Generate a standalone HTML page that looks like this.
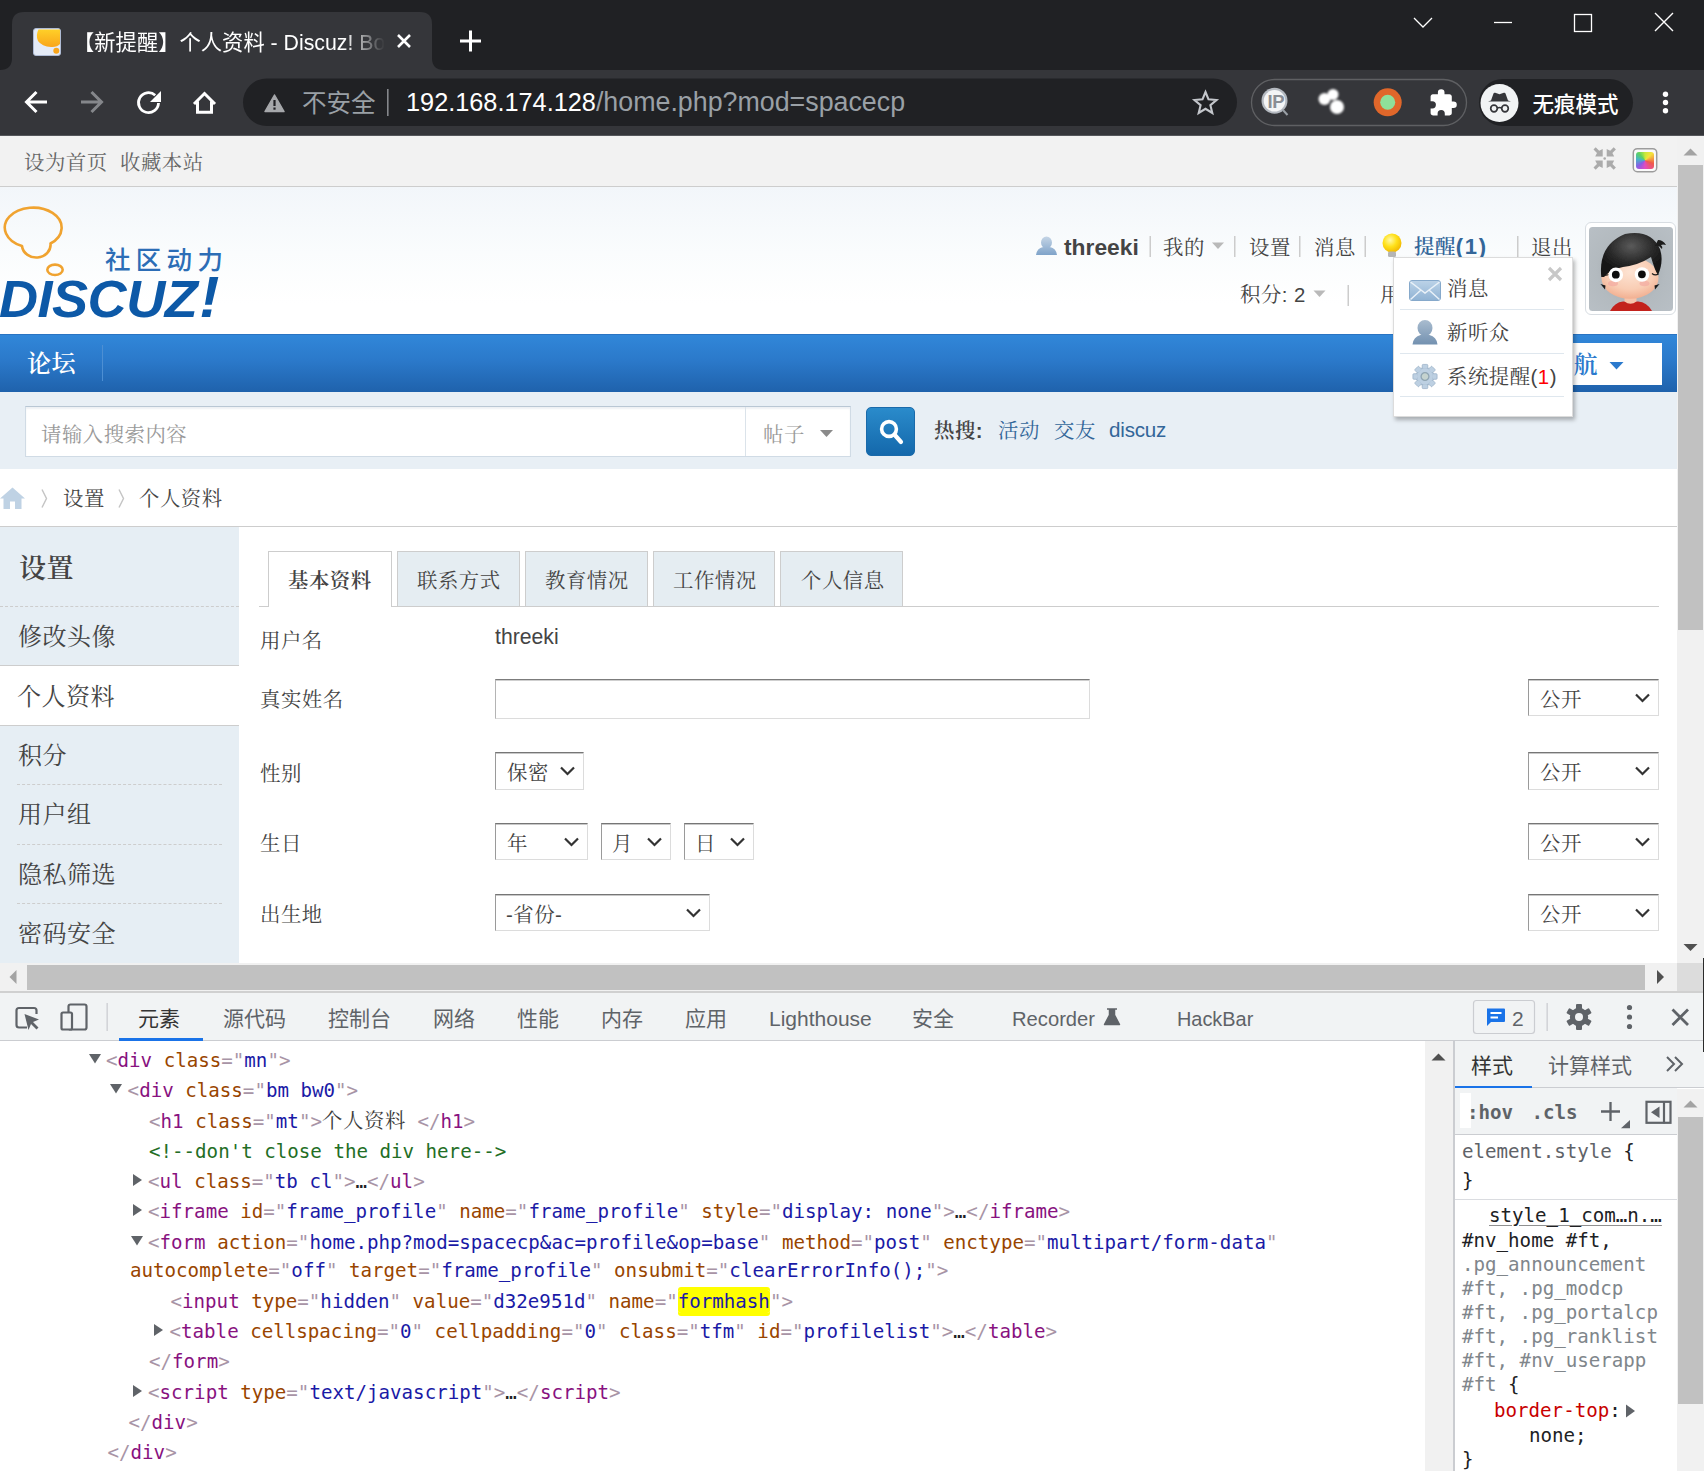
<!DOCTYPE html>
<html lang="zh-CN">
<head>
<meta charset="utf-8">
<title>【新提醒】个人资料 - Discuz! Board</title>
<style>
html,body{margin:0;padding:0;}
body{width:1704px;height:1471px;overflow:hidden;background:#fff;position:relative;font-family:"Liberation Sans","Noto Sans CJK SC",sans-serif;}
#root{position:absolute;left:0;top:0;width:1704px;height:1471px;overflow:hidden;}
.a{position:absolute;}
.t{position:absolute;white-space:nowrap;line-height:30px;height:30px;}
.ui{font-family:"Liberation Sans","Noto Sans CJK SC",sans-serif;}
.sf{font-family:"Liberation Sans","Noto Serif CJK SC",serif;}
.mono{font-family:"DejaVu Sans Mono","Liberation Mono","Noto Serif CJK SC",monospace;}
svg{position:absolute;overflow:visible;}
/* page text */
.pg{font-size:20.4px;letter-spacing:0.5px;color:#444;}
.pg .t{margin-top:1.5px;}
/* devtools dom */
.dom{font-size:19.15px;color:#202124;}
.tg{color:#881280;}
.an{color:#994500;}
.av{color:#1a1aa6;}
.pc{color:#a894a6;}
.cm{color:#236e25;}
.gy{color:#5f6368;}
.gy2{color:#80868b;}
.sel{background:#fff;border:1px solid #dcdcdc;border-top:1px solid #767676;border-left:1px solid #9a9a9a;box-shadow:inset 0 1px 0 #c8c8c8;padding-top:1px;}
</style>
</head>
<body>
<div id="root">
<!--CHROME-->
<div class="a" style="left:0;top:0;width:1704px;height:70px;background:#202124"></div>
<div class="a" style="left:0;top:70px;width:1704px;height:65px;background:#35363a"></div>
<div class="a" style="left:0;top:135px;width:1704px;height:1px;background:#55575b;z-index:6"></div>
<svg style="left:0;top:0" width="1704" height="135" viewBox="0 0 1704 135">
<path d="M0,70 Q12,70 12,58 L12,24 Q12,12 24,12 L420,12 Q432,12 432,24 L432,58 Q432,70 444,70 Z" fill="#35363a"/>
<!-- favicon -->
<rect x="33.5" y="28.5" width="27" height="27" rx="2.5" fill="#e4ebf6" stroke="#aebbd4" stroke-width="1"/>
<defs><linearGradient id="fvg" x1="0" y1="0" x2="0" y2="1"><stop offset="0" stop-color="#ffd028"/><stop offset="1" stop-color="#f9a51a"/></linearGradient></defs><path d="M38.500,29.500 H60 V44 Q57,47.500 51,47 Q42,46.500 38,41 Q35.500,35 38.500,29.500 Z" fill="url(#fvg)"/>
<circle cx="56.300" cy="50.700" r="3" fill="#f9a51a"/>
<!-- tab close -->
<path d="M398,35 L410,47 M410,35 L398,47" stroke="#fff" stroke-width="2.6" fill="none"/>
<!-- new tab plus -->
<path d="M460,41 H481 M470.5,30.5 V51.500" stroke="#fff" stroke-width="3" fill="none"/>
<!-- window controls -->
<path d="M1414,18 L1423,27 L1432,18" stroke="#fff" stroke-width="1.3" fill="none"/>
<path d="M1494,22.500 H1512" stroke="#fff" stroke-width="1.3" fill="none"/>
<rect x="1574.500" y="14.500" width="17" height="17" stroke="#fff" stroke-width="1.3" fill="none"/>
<path d="M1655,13 L1673,31 M1673,13 L1655,31" stroke="#fff" stroke-width="1.4" fill="none"/>
<!-- nav buttons -->
<path d="M47,102 H27 M36.500,92 L26.500,102 L36.500,112" stroke="#fff" stroke-width="3" fill="none"/>
<path d="M81,102 H101 M91.500,92 L101.500,102 L91.500,112" stroke="#85878b" stroke-width="3" fill="none"/>
<path d="M158.500,103 A10,10 0 1 1 155.200,95.200" stroke="#fff" stroke-width="2.800" fill="none"/>
<path d="M161,91 V102 H150 Z" fill="#fff"/>
<path d="M194,104 L204.500,93.500 L215,104 M197.500,101.500 V112.300 H211.500 V101.500" stroke="#fff" stroke-width="3" fill="none" stroke-linejoin="miter"/>
<!-- omnibox -->
<rect x="243" y="78.500" width="994" height="47.500" rx="23.700" fill="#202124"/>
<path d="M274.500,95 L284,111.500 H265 Z" fill="#a6a8ab" stroke="#a6a8ab" stroke-width="1.500" stroke-linejoin="round"/>
<rect x="273.400" y="100" width="2.200" height="6" fill="#202124"/><rect x="273.400" y="107.500" width="2.200" height="2.200" fill="#202124"/>
<rect x="387" y="89" width="1.600" height="27" fill="#85878b"/>
<!-- star -->
<path d="M1205.500,92 L1208.500,99.300 L1216.500,100 L1210.400,105.200 L1212.300,113 L1205.500,108.800 L1198.700,113 L1200.600,105.200 L1194.500,100 L1202.500,99.300 Z" stroke="#c4c7cc" stroke-width="2.1" fill="none" stroke-linejoin="miter"/>
<!-- extension pill -->
<rect x="1251.500" y="79.500" width="215" height="46" rx="23" fill="none" stroke="#5f6063" stroke-width="1.300"/>
<circle cx="1274.500" cy="100.800" r="13" fill="#b4b9c0"/><circle cx="1274.500" cy="100.800" r="10.800" fill="#f4f5f6"/>
<path d="M1282.500,109.500 L1287.500,115" stroke="#9aa0a6" stroke-width="2"/>
<g fill="#fff" style="filter:blur(0.9px)"><circle cx="1324.500" cy="99" r="6"/><circle cx="1333" cy="94.500" r="5.500"/><circle cx="1337" cy="107" r="7"/></g>
<circle cx="1387.700" cy="102.300" r="14" fill="#e0672a"/><circle cx="1387.700" cy="102.300" r="7.500" fill="#8fe09a"/>
<path d="M1453.500,101.500 h-1.700 v-5 c0,-1.300 -1,-2.300 -2.300,-2.300 h-5 v-1.700 a3.300,3.300 0 0 0 -6.600,0 v1.700 h-5 c-1.300,0 -2.300,1 -2.300,2.300 v4.700 h1.700 a3.600,3.600 0 0 1 0,7.200 h-1.700 v4.700 c0,1.300 1,2.300 2.300,2.300 h4.700 v-1.700 a3.600,3.600 0 0 1 7.200,0 v1.700 h4.700 c1.300,0 2.300,-1 2.300,-2.300 v-5 h1.700 a3.300,3.300 0 0 0 0,-6.600 z" fill="#fff"/>
<!-- incognito pill -->
<rect x="1479" y="79" width="154" height="47" rx="23.500" fill="#202124"/>
<circle cx="1499.500" cy="103" r="19" fill="#f1f3f4"/>
<path d="M1488,101.500 H1511 L1508,100.500 L1505.500,93.500 Q1505,92.300 1503.800,92.800 L1499.500,94.200 L1495.200,92.800 Q1494,92.300 1493.500,93.500 L1491,100.500 Z" fill="#35363a"/>
<circle cx="1494" cy="108.500" r="3.300" fill="none" stroke="#35363a" stroke-width="1.700"/><circle cx="1505" cy="108.500" r="3.300" fill="none" stroke="#35363a" stroke-width="1.700"/><path d="M1497.300,108 Q1499.500,106.800 1501.700,108" stroke="#35363a" stroke-width="1.500" fill="none"/>
<!-- menu dots -->
<circle cx="1665.500" cy="94.300" r="2.700" fill="#fff"/><circle cx="1665.500" cy="102.500" r="2.700" fill="#fff"/><circle cx="1665.500" cy="110.700" r="2.700" fill="#fff"/>
</svg>
<div class="t ui" id="tabtitle" style="left:73px;top:28px;width:313px;overflow:hidden;font-size:21.300px;font-weight:400;color:#fff;-webkit-mask-image:linear-gradient(90deg,#000 0,#000 270px,transparent 312px);mask-image:linear-gradient(90deg,#000 0,#000 270px,transparent 312px)">【新提醒】个人资料 - Discuz! Board</div>
<div class="t ui" id="insec" style="left:302px;top:88.500px;font-size:24.500px;color:#9aa0a6">不安全</div>
<div class="t ui" id="url" style="left:406px;top:87px;font-size:25.300px;color:#fff">192.168.174.128<span style="color:#9aa0a6;font-size:26.800px">/home.php?mod=spacecp</span></div>
<div class="t ui" id="ipx" style="left:1267.500px;top:86.500px;font-size:18.500px;font-weight:bold;color:#8b8e94;letter-spacing:-0.5px">IP</div>
<div class="t ui" id="incog" style="left:1532.500px;top:89.500px;font-size:21.500px;font-weight:500;color:#fff">无痕模式</div>
<!--/CHROME-->
<!--PAGE-->
<div class="a" id="page" style="left:0;top:135px;width:1677px;height:828px;overflow:hidden;background:#fff">
<div class="a sf pg" style="left:0;top:-135px;width:1677px;height:963px;">
<!-- top bar -->
<div class="a" style="left:0;top:135px;width:1677px;height:51px;background:#f2f2f2;border-bottom:1px solid #cdcdcd"></div>
<div class="t" id="tb1" style="left:24px;top:146px;color:#666">设为首页</div>
<div class="t" id="tb2" style="left:120px;top:146px;color:#666">收藏本站</div>
<svg style="left:1590px;top:145px" width="70" height="30" viewBox="1590 145 70 30">
<g transform="translate(1604.700,158.500)" fill="#ababab"><path d="M-11.200,-9 L-9,-11.200 L-5.500,-7.700 L-2,-9.500 L-2,-2 L-9.500,-2 L-7.700,-5.500 Z"/><g transform="scale(-1,1)"><path d="M-11.200,-9 L-9,-11.200 L-5.500,-7.700 L-2,-9.500 L-2,-2 L-9.500,-2 L-7.700,-5.500 Z"/></g><g transform="scale(1,-1)"><path d="M-11.200,-9 L-9,-11.200 L-5.500,-7.700 L-2,-9.500 L-2,-2 L-9.500,-2 L-7.700,-5.500 Z"/></g><g transform="scale(-1,-1)"><path d="M-11.200,-9 L-9,-11.200 L-5.500,-7.700 L-2,-9.500 L-2,-2 L-9.500,-2 L-7.700,-5.500 Z"/></g><circle r="1.300"/></g>
<rect x="1633.300" y="148.700" width="23.400" height="23" rx="4" fill="#fafafa" stroke="#9c9c9c" stroke-width="1.500"/>

</svg>
<div class="a" style="left:1636px;top:151.500px;width:18px;height:17.500px;border-radius:3px;background:conic-gradient(from 0deg,#c8e83a,#f6e23a 45deg,#f05a4a 110deg,#e24cc0 180deg,#8a5ce6 230deg,#46b6c6 280deg,#5ed25e 320deg,#c8e83a 360deg);filter:blur(0.6px)"></div>
<!-- header -->
<div class="a" style="left:0;top:187px;width:1677px;height:146px;background:linear-gradient(#f2f6fa 0,#fafcfd 45%,#fff 80%)"></div>
<svg style="left:0;top:200px" width="240" height="130" viewBox="0 200 240 130">
<g fill="none" stroke="#f0a330" stroke-width="2.600"><path d="M22,246 A28.400,20 0 1 1 50.500,243.500 A14,12.500 0 1 1 22,246 Z" stroke-linejoin="round"/><ellipse cx="55" cy="269.800" rx="7.700" ry="5.200"/></g>
</svg>
<div class="t ui" id="lg1" style="left:105px;top:243.500px;font-size:25.500px;font-weight:500;color:#2c6db6;letter-spacing:5.300px">社区动力</div>
<div class="t" id="lg2" style="left:-1px;top:265.800px;height:60px;line-height:60px;font-family:'Liberation Sans',sans-serif;font-size:51px;font-weight:bold;font-style:italic;color:#0d59a7;letter-spacing:-0.5px;transform:scaleX(1.061);transform-origin:0 0">DISCUZ<span style="font-size:57px;margin-left:2px">!</span></div>
<!-- user nav -->
<svg style="left:1030px;top:230px" width="380" height="80" viewBox="1030 230 380 80">
<defs><linearGradient id="ug" x1="0" y1="0" x2="0" y2="1"><stop offset="0" stop-color="#c5d5e6"/><stop offset="1" stop-color="#7fa3c9"/></linearGradient>
<radialGradient id="bg1" cx="0.4" cy="0.35" r="0.7"><stop offset="0" stop-color="#fff9a8"/><stop offset="0.5" stop-color="#ffe11a"/><stop offset="1" stop-color="#f0b400"/></radialGradient></defs>
<path d="M1046.500,236.500 a5.500,6 0 0 1 0,12 a5.500,6 0 0 1 0,-12 Z M1036,255 q1,-7 7,-8 h7 q6,1 7,8 Z" fill="url(#ug)"/>
<g fill="#ccc"><rect x="1149.500" y="236" width="1.500" height="21"/><rect x="1234" y="236" width="1.500" height="21"/><rect x="1299" y="236" width="1.500" height="21"/><rect x="1364.500" y="236" width="1.500" height="21"/><rect x="1517" y="236" width="1.500" height="21"/><rect x="1347.500" y="285" width="1.500" height="21"/></g>
<path d="M1212,242.500 H1224 L1218,249 Z" fill="#b9b9b9"/>
<path d="M1313.500,290.500 H1325.500 L1319.500,297 Z" fill="#b9b9b9"/>
<circle cx="1392" cy="243" r="9.500" fill="url(#bg1)"/><rect x="1388" y="251.500" width="8" height="5.500" rx="1.500" fill="#b5b5b5"/>
</svg>
<div class="t" id="un" style="left:1064px;top:230px;font-weight:bold;font-size:22.800px;letter-spacing:0;color:#444">threeki</div>
<div class="t" id="n1" style="margin-top:0.5px;left:1163px;top:232px">我的</div>
<div class="t" id="n2" style="margin-top:0.5px;left:1249px;top:232px">设置</div>
<div class="t" id="n3" style="margin-top:0.5px;left:1314px;top:232px">消息</div>
<div class="t" id="n4" style="left:1414px;top:230px;font-weight:600;color:#369">提醒<span style="font-family:'Liberation Sans',sans-serif;font-weight:bold;font-size:22px;letter-spacing:1.700px">(1)</span></div>
<div class="t" id="n5" style="margin-top:0.5px;left:1531px;top:232px">退出</div>
<div class="t" id="n6" style="left:1240px;top:278px">积分: 2</div>
<div class="t" id="n7" style="left:1380px;top:278px">用户组</div>
<!-- avatar -->
<div class="a" style="left:1585px;top:222px;width:89px;height:91px;background:#fff;border:1px solid #d8dde2;border-radius:6px"></div>
<svg style="left:1589px;top:227px" width="84" height="84" viewBox="0 0 84 84">
<defs><clipPath id="avc"><rect x="0" y="0" width="84" height="84" rx="3.500"/></clipPath>
<radialGradient id="avb" cx="0.5" cy="0.5" r="0.75"><stop offset="0" stop-color="#9da4aa"/><stop offset="0.55" stop-color="#b3babf"/><stop offset="1" stop-color="#b9c0c6"/></radialGradient>
<radialGradient id="avh" cx="0.5" cy="0.3" r="0.6"><stop offset="0" stop-color="#5a5a5a"/><stop offset="0.6" stop-color="#2a2a2a"/><stop offset="1" stop-color="#141414"/></radialGradient>
<radialGradient id="avf" cx="0.5" cy="0.35" r="0.7"><stop offset="0" stop-color="#fde3d3"/><stop offset="0.6" stop-color="#f9cdb4"/><stop offset="1" stop-color="#f0a98a"/></radialGradient>
<filter id="avbl"><feGaussianBlur stdDeviation="0.7"/></filter></defs>
<g clip-path="url(#avc)"><rect width="84" height="84" fill="url(#avb)"/>
<g filter="url(#avbl)">
<path d="M21,84 Q26,75 34,74.500 H49 Q58,75 63,84 Z" fill="#c3201f"/>
<path d="M35.500,66 H47.500 V74.500 Q41.500,79 35.500,74.500 Z" fill="#f6c4ab"/>
<ellipse cx="41" cy="51" rx="28.500" ry="20.800" fill="url(#avf)"/>
<path d="M12.300,50 Q9,18 36,7 Q62,2 71,22 Q75,34 69,48 Q66,44 62,30 Q50,38 34,40 Q22,42 15,50 Z" fill="url(#avh)"/>
<path d="M69,13 q5,0 8,5 q-3,-1 -5,0 q2,2 1,4 q-3,-4 -7,-3 Z" fill="#1a1a1a"/>
<path d="M11.500,57 l5,1.500 l-0.500,4 Z M70.500,57 l-5,1.500 l0.500,4 Z" fill="#1a1a1a"/>
<path d="M63,46.500 q3,2.500 6.500,0.500" stroke="#1a1a1a" stroke-width="1.200" fill="none"/>
<path d="M13.500,46.500 q2.500,2.500 6,1" stroke="#1a1a1a" stroke-width="1.200" fill="none"/>
<ellipse cx="24" cy="56.500" rx="5" ry="2.800" fill="#f3a8a0" opacity="0.65"/><ellipse cx="55.500" cy="56.500" rx="5" ry="2.800" fill="#f3a8a0" opacity="0.65"/>
<circle cx="26.800" cy="47.900" r="7.300" fill="#fff"/><circle cx="53" cy="47.500" r="7.300" fill="#fff"/>
<circle cx="26.800" cy="47.700" r="3.900" fill="#111"/><circle cx="52.900" cy="47.300" r="3.900" fill="#111"/>
</g></g></svg>
<!-- nav -->
<div class="a" style="left:0;top:334px;width:1677px;height:58px;background:linear-gradient(#3187d9 0,#2b79ca 45%,#1f62ac 100%);border-top:1px solid #2a74c2;box-sizing:border-box"></div>
<div class="t" id="nv1" style="left:27px;top:347px;font-size:24px;letter-spacing:0.5px;font-weight:600;color:#fff">论坛</div>
<div class="a" style="left:102px;top:345px;width:1px;height:36px;background:#4d8fd3"></div>
<div class="a" style="left:1500px;top:343px;width:162px;height:42px;background:#fff"></div>
<div class="t" id="nv2" style="left:1500px;top:348px;font-size:24px;letter-spacing:0.5px;font-weight:600;color:#2b7acd">快捷导航</div>
<svg style="left:1609px;top:361px" width="16" height="10"><path d="M0.500,1 H14.500 L7.500,8.500 Z" fill="#2b7acd"/></svg>
<!-- search -->
<div class="a" style="left:0;top:392px;width:1677px;height:76.500px;background:#e8eff5"></div>
<div class="a" style="left:25px;top:406px;width:824px;height:49px;background:#fff;border:1px solid #d0dbe5;border-top-color:#b9c7d4;box-shadow:inset 0 2px 2px #eef1f4"></div>
<div class="a" style="left:745px;top:407px;width:1px;height:49px;background:#dbe3ea"></div>
<div class="t" id="s1" style="left:41px;top:418px;color:#999">请输入搜索内容</div>
<div class="t" id="s2" style="left:763px;top:418px;color:#999">帖子</div>
<svg style="left:819px;top:429px" width="16" height="10"><path d="M1,1 H14 L7.500,8 Z" fill="#8a8a8a"/></svg>
<div class="a" style="left:866px;top:407px;width:49px;height:49px;border-radius:5px;background:linear-gradient(#2a8bcb,#1468ab);border:1px solid #1a6aaa;box-sizing:border-box"></div>
<svg style="left:866px;top:406px" width="50" height="50"><circle cx="23" cy="23" r="7.400" stroke="#fff" stroke-width="3.600" fill="none"/><path d="M28.800,29 L35,36" stroke="#fff" stroke-width="4.200" stroke-linecap="round"/></svg>
<div class="t" id="h0" style="margin-top:0;left:934px;top:416px;font-weight:600;color:#444">热搜:</div>
<div class="t" id="h1" style="margin-top:0;left:998px;top:416px;color:#369">活动</div>
<div class="t" id="h2" style="margin-top:0;left:1054px;top:416px;color:#369">交友</div>
<div class="t" id="h3" style="margin-top:0;left:1109px;top:415px;color:#369;letter-spacing:-0.2px;font-size:20.600px">discuz</div>
<!-- breadcrumb -->
<svg style="left:0;top:485px" width="140" height="26" viewBox="0 485 140 26">
<path d="M0,498.500 L12.500,487.500 L25,498.500 H21.500 V509 H15 V501.500 H10 V509 H3.500 V498.500 Z" fill="#bfd2e4"/>
<path d="M42,489.500 L46.500,498.500 L42,507.500" stroke="#c4c4c4" stroke-width="1.400" fill="none"/>
<path d="M119,489.500 L123.500,498.500 L119,507.500" stroke="#c4c4c4" stroke-width="1.400" fill="none"/>
</svg>
<div class="t" id="b1" style="left:63px;top:482px">设置</div>
<div class="t" id="b2" style="left:139px;top:482px">个人资料</div>
<div class="a" style="left:0;top:526px;width:1677px;height:1px;background:#cdcdcd"></div>
<!-- sidebar -->
<div class="a" style="left:0;top:527px;width:239px;height:440px;background:#e6eef4"></div>
<div class="t" id="sb0" style="left:19px;top:552.500px;font-size:27px;font-weight:600">设置</div>
<div class="a" style="left:0;top:606px;width:239px;border-top:1px dashed #cdcdcd"></div>
<div class="t" id="sb1" style="left:18px;top:620px;font-size:24px;letter-spacing:0.5px;margin-top:1.700px">修改头像</div>
<div class="a" style="left:0;top:665px;width:239px;height:59px;background:#fff;border-top:1px solid #cdcdcd;border-bottom:1px solid #cdcdcd"></div>
<div class="t" id="sb2" style="left:17px;top:680px;font-size:24px;letter-spacing:0.5px;margin-top:1.700px">个人资料</div>
<div class="t" id="sb3" style="left:18px;top:739px;font-size:24px;letter-spacing:0.5px;margin-top:1.700px">积分</div>
<div class="a" style="left:17px;top:784px;width:205px;border-top:1px dashed #cdcdcd"></div>
<div class="t" id="sb4" style="left:18px;top:798px;font-size:24px;letter-spacing:0.5px;margin-top:1.700px">用户组</div>
<div class="a" style="left:17px;top:844px;width:205px;border-top:1px dashed #cdcdcd"></div>
<div class="t" id="sb5" style="left:18px;top:858px;font-size:24px;letter-spacing:0.5px;margin-top:1.700px">隐私筛选</div>
<div class="a" style="left:17px;top:903px;width:205px;border-top:1px dashed #cdcdcd"></div>
<div class="t" id="sb6" style="left:18px;top:917px;font-size:24px;letter-spacing:0.5px;margin-top:1.700px">密码安全</div>
<!--MAIN-->
<!-- tabs -->
<div class="a" style="left:259px;top:606px;width:1400px;height:1px;background:#cdcdcd"></div>
<div class="a" style="left:268px;top:551px;width:123px;height:56px;background:#fff;border:1px solid #cdcdcd;border-bottom:none;box-sizing:content-box;width:122px;height:55px"></div>
<div class="a" style="left:397px;top:551px;width:121px;height:54px;background:#e5edf2;border:1px solid #cdcdcd"></div>
<div class="a" style="left:525px;top:551px;width:120.500px;height:54px;background:#e5edf2;border:1px solid #cdcdcd"></div>
<div class="a" style="left:653px;top:551px;width:120px;height:54px;background:#e5edf2;border:1px solid #cdcdcd"></div>
<div class="a" style="left:780px;top:551px;width:121px;height:54px;background:#e5edf2;border:1px solid #cdcdcd"></div>
<div class="t" id="t1" style="left:288px;top:564px;font-weight:600">基本资料</div>
<div class="t" id="t2" style="left:417px;top:564px">联系方式</div>
<div class="t" id="t3" style="left:545px;top:564px">教育情况</div>
<div class="t" id="t4" style="left:673px;top:564px">工作情况</div>
<div class="t" id="t5" style="left:801px;top:564px">个人信息</div>
<!-- rows -->
<div class="t" id="r1" style="left:260px;top:624px">用户名</div>
<div class="t" id="r1v" style="left:495px;top:620px;font-size:21.200px;letter-spacing:0">threeki</div>
<div class="t" id="r2" style="left:260px;top:683px">真实姓名</div>
<div class="a" style="left:495px;top:679px;width:593px;height:37px;background:#fff;border:1px solid #dcdcdc;border-top:1px solid #7c7c7c;border-left-color:#b4b4b4;box-shadow:inset 0 1px 0 #cfcfcf;height:38px"></div>
<div class="t" id="r3" style="left:260px;top:757px">性别</div>
<div class="t" id="r4" style="left:260px;top:827px">生日</div>
<div class="t" id="r5" style="left:260px;top:898px">出生地</div>
<div class="a sel" style="left:495px;top:752px;width:87px;height:35px"></div>
<div class="a sel" style="left:495px;top:823px;width:91px;height:34px"></div>
<div class="a sel" style="left:601px;top:823px;width:68px;height:34px"></div>
<div class="a sel" style="left:684px;top:823px;width:68px;height:34px"></div>
<div class="a sel" style="left:495px;top:894px;width:213px;height:34px"></div>
<div class="a sel" style="left:1528px;top:679px;width:129px;height:34px"></div>
<div class="a sel" style="left:1528px;top:752px;width:129px;height:35px"></div>
<div class="a sel" style="left:1528px;top:823px;width:129px;height:34px"></div>
<div class="a sel" style="left:1528px;top:894px;width:129px;height:34px"></div>
<div class="t" id="v1" style="left:507px;top:756px">保密</div>
<div class="t" id="v2" style="left:507px;top:827px">年</div>
<div class="t" id="v3" style="left:612px;top:827px">月</div>
<div class="t" id="v4" style="left:695px;top:827px">日</div>
<div class="t" id="v5" style="left:506px;top:898px">-省份-</div>
<div class="t" id="p1" style="left:1540px;top:683px">公开</div>
<div class="t" id="p2" style="left:1540px;top:756px">公开</div>
<div class="t" id="p3" style="left:1540px;top:827px">公开</div>
<div class="t" id="p4" style="left:1540px;top:898px">公开</div>
<svg style="left:0;top:0" width="1677" height="963" viewBox="0 0 1677 963"><g stroke="#333" stroke-width="2.200" fill="none">
<path d="M561,767.500 L567.500,774 L574,767.500"/>
<path d="M565,838.500 L571.500,845 L578,838.500"/>
<path d="M648,838.500 L654.500,845 L661,838.500"/>
<path d="M731,838.500 L737.500,845 L744,838.500"/>
<path d="M687,909.500 L693.500,916 L700,909.500"/>
<path d="M1636,694.500 L1642.500,701 L1649,694.500"/>
<path d="M1636,767.500 L1642.500,774 L1649,767.500"/>
<path d="M1636,838.500 L1642.500,845 L1649,838.500"/>
<path d="M1636,909.500 L1642.500,916 L1649,909.500"/>
</g></svg>
<!-- popup -->
<div class="a" style="left:1393px;top:257px;width:178px;height:158px;background:#fff;border:1px solid #dcdcdc;box-shadow:2px 3px 4px rgba(0,0,0,0.28)"></div>
<div class="a" style="left:1400px;top:309px;width:164px;height:1px;background:#dfe7ee"></div>
<div class="a" style="left:1400px;top:353px;width:164px;height:1px;background:#dfe7ee"></div>
<div class="a" style="left:1400px;top:396px;width:164px;height:1px;background:#dfe7ee"></div>
<svg style="left:1393px;top:258px" width="180" height="160" viewBox="1393 258 180 160">
<defs><linearGradient id="eg" x1="0" y1="0" x2="0" y2="1"><stop offset="0" stop-color="#bcd3e8"/><stop offset="1" stop-color="#8fb2d3"/></linearGradient>
<linearGradient id="pg2" x1="0" y1="0" x2="0" y2="1"><stop offset="0" stop-color="#a9bccf"/><stop offset="1" stop-color="#7391b0"/></linearGradient></defs>
<path d="M1549,268 L1561,280 M1561,268 L1549,280" stroke="#c8c8c8" stroke-width="3.200"/>
<rect x="1409.500" y="280.500" width="31" height="20" rx="2.500" fill="url(#eg)" stroke="#86a9cb" stroke-width="1"/>
<path d="M1410.500,282 L1425,293 L1439.500,282 M1410.500,299.500 L1421,290 M1439.500,299.500 L1429,290" stroke="#e9f1f8" stroke-width="1.500" fill="none"/>
<path d="M1425,320 a7.500,8 0 0 1 0,16 a7.500,8 0 0 1 0,-16 Z M1412.500,344.500 q1,-8 8,-9.500 h9 q7,1.500 8,9.500 Z" fill="url(#pg2)"/>
<g transform="translate(1425,376.500) scale(0.93)"><circle r="9.500" fill="#bdd0e2" stroke="#9ab0c6" stroke-width="1"/><g fill="#bdd0e2" stroke="#9ab0c6" stroke-width="0.800"><rect x="-3" y="-13" width="6" height="5" rx="1"/><rect x="-3" y="8" width="6" height="5" rx="1"/><rect x="-13" y="-3" width="5" height="6" rx="1"/><rect x="8" y="-3" width="5" height="6" rx="1"/><rect x="-3" y="-13" width="6" height="5" rx="1" transform="rotate(45)"/><rect x="-3" y="-13" width="6" height="5" rx="1" transform="rotate(135)"/><rect x="-3" y="-13" width="6" height="5" rx="1" transform="rotate(225)"/><rect x="-3" y="-13" width="6" height="5" rx="1" transform="rotate(315)"/></g><circle r="8.500" fill="#bdd0e2"/><circle r="4.200" fill="#c5d3cf" stroke="#8fa5b3" stroke-width="1.400"/></g>
</svg>
<div class="t" id="q1" style="margin-top:1px;left:1447px;top:273px">消息</div>
<div class="t" id="q2" style="margin-top:1px;left:1447px;top:317px">新听众</div>
<div class="t" id="q3" style="margin-top:1px;left:1447px;top:361px">系统提醒(<span style="color:#f00">1</span>)</div>
<!--/MAIN-->
</div>
</div>
<!-- scrollbars -->
<div class="a" style="left:1677px;top:135px;width:27px;height:856px;background:#f1f1f1"></div>
<div class="a" style="left:1678px;top:165px;width:25px;height:465px;background:#c1c1c1"></div>
<svg style="left:1677px;top:135px" width="27" height="830"><path d="M6.500,20.500 L13.500,13.500 L20.500,20.500 Z" fill="#a3a3a3"/><path d="M6.500,809 L13.500,816 L20.500,809 Z" fill="#505050"/></svg>
<div class="a" style="left:0;top:963px;width:1677px;height:28px;background:#f1f1f1"></div>
<div class="a" style="left:1677px;top:963px;width:27px;height:29px;background:#dcdcdc"></div>
<div class="a" style="left:1703px;top:958px;width:1px;height:94px;background:#2b2b2b;z-index:5"></div>
<div class="a" style="left:27px;top:965px;width:1618px;height:25px;background:#c1c1c1"></div>
<svg style="left:0;top:963px" width="1677" height="28"><path d="M16.500,7 L9.500,14 L16.500,21 Z" fill="#a3a3a3"/><path d="M1657,7 L1664,14 L1657,21 Z" fill="#505050"/></svg>
<!--/PAGE-->
<!--DEVTOOLS-->
<div class="a" style="left:0;top:991px;width:1704px;height:480px;background:#fff"></div>
<div class="a" style="left:0;top:991px;width:1704px;height:49px;background:#f1f3f4;border-top:2px solid #d0d0d0;border-bottom:1px solid #cbcdd1;box-sizing:content-box;height:47px"></div>
<svg style="left:0;top:993px" width="1704" height="48" viewBox="0 993 1704 48">
<g fill="none" stroke="#5f6368" stroke-width="2.200"><path d="M27,1027.500 H19 Q16.500,1027.500 16.500,1025 V1010.500 Q16.500,1008 19,1008 H34 Q36.500,1008 36.500,1010.500 V1014"/></g>
<path d="M24.500,1014 L39,1019.500 L33,1022 L38.500,1027.500 L36.500,1029.500 L31,1024 L28.500,1030 Z" fill="#5f6368"/>
<g fill="none" stroke="#5f6368" stroke-width="2.200"><rect x="68.500" y="1004.500" width="18" height="25" rx="2"/><rect x="61.500" y="1012.500" width="10.500" height="17" rx="1.500" fill="#f1f3f4"/></g>
<rect x="106.500" y="1003" width="1.300" height="28" fill="#cbcdd1"/>
<rect x="119" y="1038" width="84" height="3" fill="#1a73e8"/>
<path d="M1107,1009 H1117 M1109.500,1009 V1015 L1104.500,1024.500 H1119.500 L1114.500,1015 V1009 Z" fill="#5f6368" stroke="#5f6368" stroke-width="1.500" stroke-linejoin="round"/>
<rect x="1473.500" y="1000.500" width="61" height="33" rx="3" fill="#f1f3f4" stroke="#cbcdd1" stroke-width="1.200"/>
<path d="M1487,1008.500 H1504 Q1505,1008.500 1505,1009.500 V1021 Q1505,1022 1504,1022 H1491 L1487,1026 Z" fill="#1a73e8"/>
<path d="M1490.500,1013 H1501.500 M1490.500,1017.500 H1498" stroke="#fff" stroke-width="1.800"/>
<rect x="1546.500" y="1003" width="1.300" height="28" fill="#cbcdd1"/>
<g transform="translate(1579,1017)"><g fill="#5f6368"><circle r="9.200"/><rect x="-3" y="-13" width="6" height="6" rx="1"/><rect x="-3" y="7" width="6" height="6" rx="1"/><rect x="-3" y="-13" width="6" height="6" rx="1" transform="rotate(60)"/><rect x="-3" y="-13" width="6" height="6" rx="1" transform="rotate(120)"/><rect x="-3" y="-13" width="6" height="6" rx="1" transform="rotate(240)"/><rect x="-3" y="-13" width="6" height="6" rx="1" transform="rotate(300)"/></g><circle r="4" fill="#f1f3f4"/></g>
<g fill="#5f6368"><circle cx="1629.500" cy="1007.500" r="2.600"/><circle cx="1629.500" cy="1017" r="2.600"/><circle cx="1629.500" cy="1026.500" r="2.600"/></g>
<path d="M1672.500,1009.500 L1688,1025 M1688,1009.500 L1672.500,1025" stroke="#5f6368" stroke-width="2.800"/>
</svg>
<div class="t ui" id="dt0" style="left:138px;top:1004px;font-size:21px;color:#333">元素</div>
<div class="t ui" id="dt1" style="left:223px;top:1004px;font-size:21px;color:#5f6368">源代码</div>
<div class="t ui" id="dt2" style="left:328px;top:1004px;font-size:21px;color:#5f6368">控制台</div>
<div class="t ui" id="dt3" style="left:433px;top:1004px;font-size:21px;color:#5f6368">网络</div>
<div class="t ui" id="dt4" style="left:517px;top:1004px;font-size:21px;color:#5f6368">性能</div>
<div class="t ui" id="dt5" style="left:601px;top:1004px;font-size:21px;color:#5f6368">内存</div>
<div class="t ui" id="dt6" style="left:685px;top:1004px;font-size:21px;color:#5f6368">应用</div>
<div class="t ui" id="dt7" style="left:769px;top:1004px;font-size:21px;color:#5f6368">Lighthouse</div>
<div class="t ui" id="dt8" style="left:912px;top:1004px;font-size:21px;color:#5f6368">安全</div>
<div class="t ui" id="dt9" style="left:1012px;top:1004px;font-size:20.2px;color:#5f6368">Recorder</div>
<div class="t ui" id="dt10" style="left:1177px;top:1004px;font-size:19.9px;color:#5f6368">HackBar</div>
<div class="t ui" id="dtn" style="left:1512px;top:1004px;font-size:21px;color:#5f6368">2</div>
<div class="t mono dom" id="dr0" style="left:106px;top:1045.5px"><span class="pc">&lt;</span><span class="tg">div</span> <span class="an">class</span><span class="pc">="</span><span class="av">mn</span><span class="pc">"</span><span class="pc">&gt;</span></div>
<div class="t mono dom" id="dr1" style="left:127.6px;top:1075.5px"><span class="pc">&lt;</span><span class="tg">div</span> <span class="an">class</span><span class="pc">="</span><span class="av">bm bw0</span><span class="pc">"</span><span class="pc">&gt;</span></div>
<div class="t mono dom" id="dr2" style="left:149px;top:1106.5px"><span class="pc">&lt;</span><span class="tg">h1</span> <span class="an">class</span><span class="pc">="</span><span class="av">mt</span><span class="pc">"</span><span class="pc">&gt;</span><span class="sf" style="font-size:20.400px;letter-spacing:0.600px;line-height:0;color:#3c3c3c">个人资料</span> <span class="pc">&lt;/</span><span class="tg">h1</span><span class="pc">&gt;</span></div>
<div class="t mono dom" id="dr3" style="left:149px;top:1136.5px"><span class="cm">&lt;!--don't close the div here--&gt;</span></div>
<div class="t mono dom" id="dr4" style="left:148px;top:1166.5px"><span class="pc">&lt;</span><span class="tg">ul</span> <span class="an">class</span><span class="pc">="</span><span class="av">tb cl</span><span class="pc">"</span><span class="pc">&gt;</span><span style="color:#202124">…</span><span class="pc">&lt;/</span><span class="tg">ul</span><span class="pc">&gt;</span></div>
<div class="t mono dom" id="dr5" style="left:148px;top:1196.5px"><span class="pc">&lt;</span><span class="tg">iframe</span> <span class="an">id</span><span class="pc">="</span><span class="av">frame_profile</span><span class="pc">"</span> <span class="an">name</span><span class="pc">="</span><span class="av">frame_profile</span><span class="pc">"</span> <span class="an">style</span><span class="pc">="</span><span class="av">display: none</span><span class="pc">"</span><span class="pc">&gt;</span><span style="color:#202124">…</span><span class="pc">&lt;/</span><span class="tg">iframe</span><span class="pc">&gt;</span></div>
<div class="t mono dom" id="dr6" style="left:148px;top:1227.5px"><span class="pc">&lt;</span><span class="tg">form</span> <span class="an">action</span><span class="pc">="</span><span class="av">home.php?mod=spacecp&amp;ac=profile&amp;op=base</span><span class="pc">"</span> <span class="an">method</span><span class="pc">="</span><span class="av">post</span><span class="pc">"</span> <span class="an">enctype</span><span class="pc">="</span><span class="av">multipart/form-data</span><span class="pc">"</span></div>
<div class="t mono dom" id="dr7" style="left:130px;top:1255.5px"><span class="an">autocomplete</span><span class="pc">="</span><span class="av">off</span><span class="pc">"</span> <span class="an">target</span><span class="pc">="</span><span class="av">frame_profile</span><span class="pc">"</span> <span class="an">onsubmit</span><span class="pc">="</span><span class="av">clearErrorInfo();</span><span class="pc">"</span><span class="pc">&gt;</span></div>
<div class="t mono dom" id="dr8" style="left:170.5px;top:1286.5px"><span class="pc">&lt;</span><span class="tg">input</span> <span class="an">type</span><span class="pc">="</span><span class="av">hidden</span><span class="pc">"</span> <span class="an">value</span><span class="pc">="</span><span class="av">d32e951d</span><span class="pc">"</span> <span class="an">name</span><span class="pc">="</span><span class="av" style="background:#ffff00;border-radius:3px;box-shadow:0 -3px 0 #ffff00,0 3px 0 #ffff00">formhash</span><span class="pc">"</span><span class="pc">&gt;</span></div>
<div class="t mono dom" id="dr9" style="left:169.5px;top:1316.5px"><span class="pc">&lt;</span><span class="tg">table</span> <span class="an">cellspacing</span><span class="pc">="</span><span class="av">0</span><span class="pc">"</span> <span class="an">cellpadding</span><span class="pc">="</span><span class="av">0</span><span class="pc">"</span> <span class="an">class</span><span class="pc">="</span><span class="av">tfm</span><span class="pc">"</span> <span class="an">id</span><span class="pc">="</span><span class="av">profilelist</span><span class="pc">"</span><span class="pc">&gt;</span><span style="color:#202124">…</span><span class="pc">&lt;/</span><span class="tg">table</span><span class="pc">&gt;</span></div>
<div class="t mono dom" id="dr10" style="left:149px;top:1346.5px"><span class="pc">&lt;/</span><span class="tg">form</span><span class="pc">&gt;</span></div>
<div class="t mono dom" id="dr11" style="left:148px;top:1377.5px"><span class="pc">&lt;</span><span class="tg">script</span> <span class="an">type</span><span class="pc">="</span><span class="av">text/javascript</span><span class="pc">"</span><span class="pc">&gt;</span><span style="color:#202124">…</span><span class="pc">&lt;/</span><span class="tg">script</span><span class="pc">&gt;</span></div>
<div class="t mono dom" id="dr12" style="left:128.5px;top:1407.5px"><span class="pc">&lt;/</span><span class="tg">div</span><span class="pc">&gt;</span></div>
<div class="t mono dom" id="dr13" style="left:107.5px;top:1437.5px"><span class="pc">&lt;/</span><span class="tg">div</span><span class="pc">&gt;</span></div>
<svg style="left:0;top:1041px" width="1425" height="430" viewBox="0 1041 1425 430"><path d="M89,1054 h12 l-6,9.5 Z" fill="#5f6368"/><path d="M110,1084 h12 l-6,9.5 Z" fill="#5f6368"/><path d="M133,1174 v12 l9,-6 Z" fill="#5f6368"/><path d="M133,1204 v12 l9,-6 Z" fill="#5f6368"/><path d="M131,1236 h12 l-6,9.5 Z" fill="#5f6368"/><path d="M154,1324 v12 l9,-6 Z" fill="#5f6368"/><path d="M133,1385 v12 l9,-6 Z" fill="#5f6368"/></svg>
<div class="a" style="left:1425px;top:1041px;width:28px;height:430px;background:#f1f1f1"></div>
<svg style="left:1425px;top:1041px" width="28" height="40"><path d="M6.500,19.500 L13.500,12.500 L20.500,19.500 Z" fill="#505050"/></svg>
<div class="a" style="left:1453px;top:1041px;width:2px;height:430px;background:#cbcdd1"></div>
<div class="a" style="left:1455px;top:1041px;width:249px;height:46px;background:#f1f3f4;border-bottom:1px solid #cbcdd1"></div>
<div class="a" style="left:1455px;top:1086px;width:77px;height:3px;background:#1a73e8"></div>
<div class="t ui" id="sp1" style="left:1471px;top:1051px;font-size:21px;color:#333">样式</div>
<div class="t ui" id="sp2" style="left:1548px;top:1051px;font-size:21px;color:#5f6368">计算样式</div>
<svg style="left:1664px;top:1054px" width="22" height="20"><path d="M3,3 L10,10 L3,17 M11,3 L18,10 L11,17" stroke="#5f6368" stroke-width="2" fill="none"/></svg>
<div class="a" style="left:1455px;top:1088px;width:222px;height:46px;background:#f1f3f4;border-bottom:1px solid #cbcdd1"></div>
<div class="a" style="left:1460px;top:1093px;width:11px;height:35px;background:#fff"></div>
<div class="t mono" id="sh1" style="left:1467px;top:1097.500px;font-size:19.15px;font-weight:bold;color:#5f6368">:hov</div>
<div class="t mono" id="sh2" style="left:1531.500px;top:1097.500px;font-size:19.15px;font-weight:bold;color:#5f6368">.cls</div>
<svg style="left:1595px;top:1095px" width="80" height="36" viewBox="1595 1095 80 36"><path d="M1601,1111.500 H1620 M1610.500,1102 V1121" stroke="#5f6368" stroke-width="2.300"/><path d="M1630,1120 V1128.300 H1621 Z" fill="#5f6368"/>
<rect x="1646.500" y="1101.800" width="24" height="21" fill="none" stroke="#5f6368" stroke-width="2.200"/><path d="M1664,1101 V1123.500" stroke="#5f6368" stroke-width="2.200"/><path d="M1659.500,1106.500 V1118 L1651,1112.300 Z" fill="#5f6368"/></svg>
<div class="a" style="left:1455px;top:1199px;width:222px;height:1px;background:#dadce0"></div>
<div class="t mono dom" id="sl0" style="left:1462px;top:1137px"><span style="color:#5f6368">element.style</span> {</div>
<div class="t mono dom" id="sl1" style="left:1462px;top:1166px">}</div>
<div class="t mono dom" id="sl2" style="left:1489px;top:1201px"><span style="text-decoration:underline;text-decoration-color:#909090;text-underline-offset:3px;color:#202124">style_1_com…n.…</span></div>
<div class="t mono dom" id="sl3" style="left:1462px;top:1226px">#nv_home #ft,</div>
<div class="t mono dom" id="sl4" style="left:1462px;top:1250px"><span class="gy2">.pg_announcement</span></div>
<div class="t mono dom" id="sl5" style="left:1462px;top:1274px"><span class="gy2">#ft, .pg_modcp</span></div>
<div class="t mono dom" id="sl6" style="left:1462px;top:1298px"><span class="gy2">#ft, .pg_portalcp</span></div>
<div class="t mono dom" id="sl7" style="left:1462px;top:1322px"><span class="gy2">#ft, .pg_ranklist</span></div>
<div class="t mono dom" id="sl8" style="left:1462px;top:1346px"><span class="gy2">#ft, #nv_userapp</span></div>
<div class="t mono dom" id="sl9" style="left:1462px;top:1370px"><span class="gy2">#ft</span> {</div>
<div class="t mono dom" id="sl10" style="left:1494px;top:1396px"><span style="color:#c80000">border-top</span>:</div>
<div class="t mono dom" id="sl11" style="left:1529px;top:1421px">none;</div>
<div class="t mono dom" id="sl12" style="left:1462px;top:1445px">}</div>
<svg style="left:1625px;top:1403px" width="12" height="16"><path d="M1,1.500 V14.500 L10,8 Z" fill="#5f6368"/></svg>
<div class="a" style="left:1677px;top:1089px;width:27px;height:382px;background:#f1f1f1"></div>
<div class="a" style="left:1678px;top:1117px;width:25px;height:287px;background:#c1c1c1"></div>
<svg style="left:1677px;top:1089px" width="27" height="30"><path d="M6.500,18.500 L13.500,11.500 L20.500,18.500 Z" fill="#a3a3a3"/></svg>
<!--/DEVTOOLS-->
</div>
</body>
</html>
